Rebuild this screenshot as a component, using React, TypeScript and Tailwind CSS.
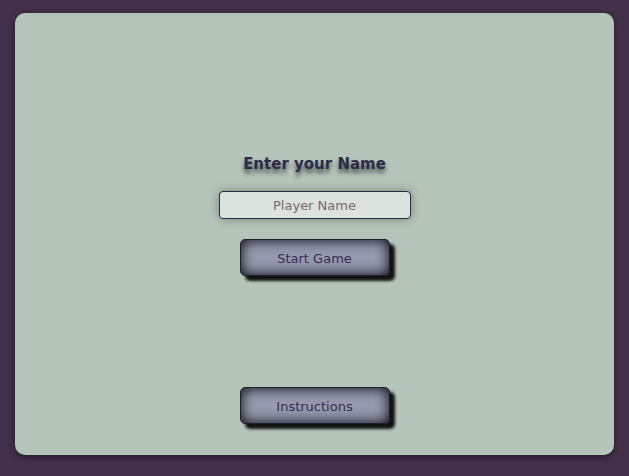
export default function App() {
  return (
    <div className="min-h-[476px] bg-[#43304a] px-[15px] pt-[13px] pb-[21px] font-['DejaVu_Sans',sans-serif]">
      <div className="h-[442px] rounded-[10px] bg-[#b5c4b8] shadow-[0_2px_6px_rgba(0,0,0,0.5)] flex flex-col items-center pt-[140px]">
        <h1 className="text-[15px] leading-[22px] font-bold text-[#2c2c4a] [text-shadow:0_4px_4px_rgba(50,50,50,0.8)]">
          Enter your Name
        </h1>
        <input
          type="text"
          placeholder="Player Name"
          className="mt-[16px] w-[192px] h-[28px] rounded-[4px] border border-[#2c2c44] bg-[#dce2dc] text-center text-[13px] text-[#5a4a4a] placeholder:text-[#7a6a6a] outline-none shadow-[0_0_10px_rgba(0,0,0,0.35)]"
        />
        <button className="mt-[20px] w-[150px] h-[37px] pt-[2px] rounded-[5px] border border-[#1e1e2a] bg-[#969aae] text-[13px] text-[#352c50] shadow-[inset_0_0_14px_rgba(0,0,10,1),5px_5px_3px_rgba(0,0,0,0.9)]">
          Start Game
        </button>
        <button className="mt-[111px] w-[150px] h-[37px] pt-[2px] rounded-[5px] border border-[#1e1e2a] bg-[#969aae] text-[13px] text-[#352c50] shadow-[inset_0_0_14px_rgba(0,0,10,1),5px_5px_3px_rgba(0,0,0,0.9)]">
          Instructions
        </button>
      </div>
    </div>
  );
}
